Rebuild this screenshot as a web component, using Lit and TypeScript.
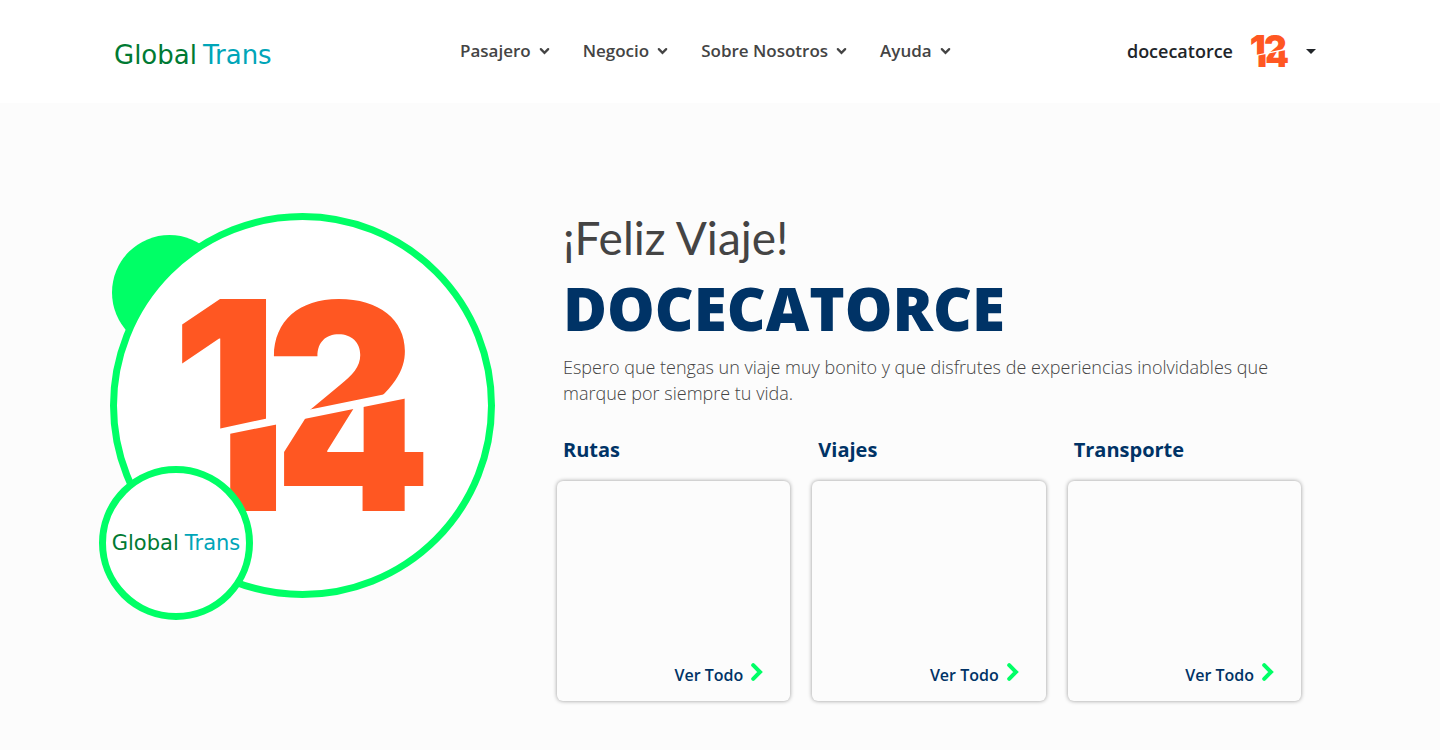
import { LitElement, html, css, svg } from "lit";
import { customElement, property } from "lit/decorators.js";

const chevronDown = html`<svg class="chev" viewBox="0 0 12 8" aria-hidden="true">
  <path d="M2 2l4 4 4-4" fill="none" stroke="currentColor" stroke-width="2.5" stroke-linecap="round" stroke-linejoin="miter" />
</svg>`;

@customElement("global-trans-logo")
class GlobalTransLogo extends LitElement {
  static styles = css`
    :host {
      display: flex;
      gap: 6px;
      font-family: "DejaVu Sans", sans-serif;
      font-weight: 400;
      line-height: 1;
      white-space: nowrap;
    }
    .global { color: #007a33; }
    .trans { color: #00a5b8; }
  `;
  render() {
    return html`<span class="global">Global</span><span class="trans">Trans</span>`;
  }
}

@customElement("doce-mark")
class DoceMark extends LitElement {
  static styles = css`
    :host { display: block; }
    svg { display: block; width: 100%; overflow: visible; }
    text {
      font-family: Inter, "Liberation Sans", sans-serif;
      font-weight: 900;
      fill: #ff5722;
    }
    .large { font-size: 232px; }
    .small { font-size: 222px; }
  `;
  render() {
    return html`<svg viewBox="0 0 243 213" role="img" aria-label="1214">
      <defs>
        <clipPath id="top"><path d="M-10 -10H260V83L200 96L107 115L37 130L-10 140Z" /></clipPath>
        <clipPath id="bottom"><path d="M-10 147L48 135L118 121L222 100L260 92V220H-10Z" /></clipPath>
      </defs>
      <g clip-path="url(#top)">${svg`<text class="large" x="-9" y="169">1</text><text class="large" x="85" y="171">2</text>`}</g>
      <g clip-path="url(#bottom)">${svg`<text class="large" x="1" y="212">1</text><text class="small" x="94" y="212">4</text>`}</g>
    </svg>`;
  }
}

@customElement("category-card")
class CategoryCard extends LitElement {
  @property() heading = "";
  static styles = css`
    :host { display: block; }
    h3 {
      margin: 0 0 16px 6px;
      font-size: 20px;
      line-height: 30px;
      font-weight: 700;
      color: #003366;
    }
    .card {
      display: flex;
      height: 220px;
      box-sizing: border-box;
      align-items: flex-end;
      justify-content: flex-end;
      padding: 0 27px 14px 0;
      border-radius: 6px;
      box-shadow: 0 0 4px rgba(0, 0, 0, 0.4);
    }
    a {
      display: flex;
      gap: 8px;
      font-size: 16px;
      line-height: 24px;
      font-weight: 600;
      color: #003366;
      text-decoration: none;
    }
    svg { width: 12px; height: 18px; }
  `;
  render() {
    return html`<h3>${this.heading}</h3>
      <div class="card">
        <a href="#">Ver Todo
          <svg viewBox="0 0 12 18" aria-hidden="true">
            <path d="M2.200 2.200L9 9l-6.800 6.800" fill="none" stroke="#00ff66" stroke-width="4" stroke-linecap="round" />
          </svg>
        </a>
      </div>`;
  }
}

@customElement("app-root")
class AppRoot extends LitElement {
  static styles = css`
    :host {
      display: block;
      min-height: 100vh;
      background: #fcfcfc;
      font-family: "Open Sans", sans-serif;
      color: #444;
    }
    header {
      display: grid;
      grid-template-columns: 346px 1fr auto;
      align-items: center;
      height: 103px;
      box-sizing: border-box;
      padding: 0 124px 0 114px;
      background: #fff;
    }
    .brand {
      font-size: 26px;
      padding-top: 6px;
      text-decoration: none;
    }
    nav { display: flex; gap: 33px; padding-bottom: 2px; }
    button {
      display: flex;
      align-items: center;
      padding: 0;
      border: 0;
      background: none;
      font: 650 17px/24px "Open Sans", sans-serif;
      color: #444;
      white-space: nowrap;
    }
    .menu { gap: 8px; }
    .chev { width: 11px; height: 8px; }
    .user {
      gap: 18px;
      font-size: 18px;
      color: #212529;
    }
    .avatar { width: 37px; }
    .caret { width: 10px; height: 5px; }
    main {
      display: grid;
      grid-template-columns: 385px minmax(0, 1fr);
      gap: 62px;
      padding: 110px 139px 40px 110px;
    }
    .art {
      position: relative;
      height: 408px;
    }
    .blob {
      position: absolute;
      left: 2px;
      top: 22px;
      width: 115px;
      height: 115px;
      border-radius: 50%;
      background: #00ff66;
    }
    .disc {
      position: relative;
      display: flex;
      align-items: center;
      justify-content: center;
      box-sizing: border-box;
      width: 385px;
      height: 385px;
      border: 7px solid #00ff66;
      border-radius: 50%;
      background: #fff;
    }
    .disc doce-mark { width: 243px; }
    .badge {
      position: absolute;
      left: -11px;
      top: 253px;
      display: flex;
      align-items: center;
      justify-content: center;
      box-sizing: border-box;
      width: 154px;
      height: 154px;
      border: 7px solid #00ff66;
      border-radius: 50%;
      background: #fff;
      font-size: 21px;
    }
    .intro { padding-left: 6px; }
    h1, h2, p { margin: 0; font-weight: 400; }
    h1 {
      font: 400 46px/50px Lato, sans-serif;
    }
    h2 {
      margin-top: 8px;
      font-size: 60px;
      line-height: 74px;
      font-weight: 800;
      color: #003366;
    }
    p {
      margin-top: 9px;
      font-size: 18px;
      line-height: 26px;
      font-weight: 350;
    }
    .cards {
      display: grid;
      grid-template-columns: repeat(3, minmax(0, 1fr));
      gap: 22px;
      margin-top: 29px;
    }
  `;
  render() {
    return html`
      <header>
        <a class="brand" href="#"><global-trans-logo></global-trans-logo></a>
        <nav>
          ${["Pasajero", "Negocio", "Sobre Nosotros", "Ayuda"].map(
            (t) => html`<button class="menu">${t}${chevronDown}</button>`
          )}
        </nav>
        <button class="user">
          docecatorce
          <doce-mark class="avatar"></doce-mark>
          <svg class="caret" viewBox="0 0 10 5" aria-hidden="true"><path d="M0 0h10L5 5z" fill="currentColor" /></svg>
        </button>
      </header>
      <main>
        <div class="art">
          <div class="blob"></div>
          <div class="disc"><doce-mark></doce-mark></div>
          <div class="badge"><global-trans-logo></global-trans-logo></div>
        </div>
        <section>
          <div class="intro">
            <h1>¡Feliz Viaje!</h1>
            <h2>DOCECATORCE</h2>
            <p>Espero que tengas un viaje muy bonito y que disfrutes de experiencias inolvidables que marque por siempre tu vida.</p>
          </div>
          <div class="cards">
            ${["Rutas", "Viajes", "Transporte"].map(
              (t) => html`<category-card heading=${t}></category-card>`
            )}
          </div>
        </section>
      </main>
    `;
  }
}
